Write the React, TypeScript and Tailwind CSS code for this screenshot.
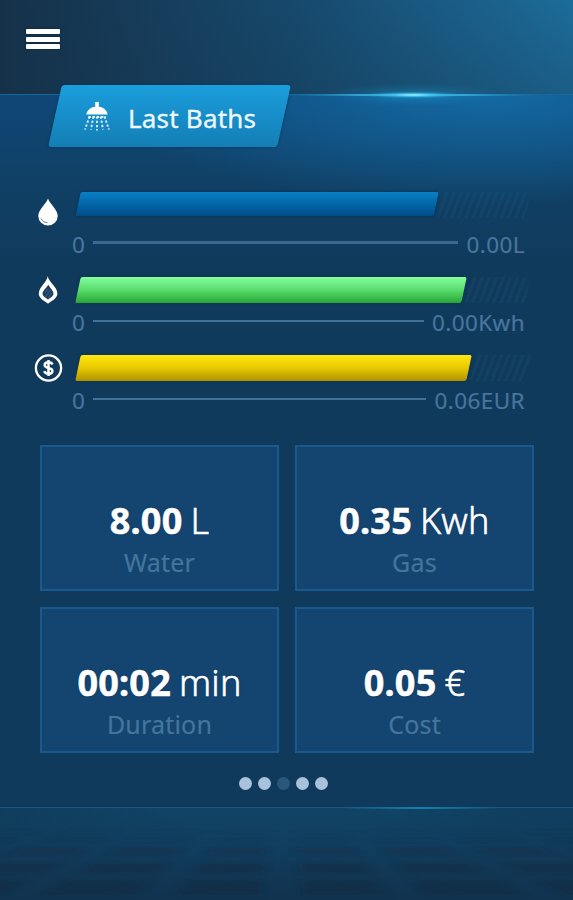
import React from "react";

interface Meter {
  id: string;
  icon: React.ReactNode;
  value: string;
  fill: string;
  width: number;
  row: string;
  rule: string;
}

interface Stat {
  value: string;
  unit: string;
  label: string;
}

const DropIcon = () => (
  <svg width="22" height="30" viewBox="0 0 22 30">
    <path
      d="M11 1.5C9.5 6.5 1.3 12.5 1.3 19a9.7 9.4 0 0 0 19.4 0C20.7 12.5 12.500 6.500 11 1.500Z"
      fill="#fff"
    />
    <path d="M4 21.500c1.200 2.500 3.500 4 6.500 4.200" fill="none" stroke="#43566f" strokeWidth="0.800" />
  </svg>
);

const FlameIcon = () => (
  <svg width="22" height="30" viewBox="0 0 22 30">
    <path
      d="M10.700 1C10.300 7 1.800 12 1.800 18.500c0 4 3.700 6.500 9.200 10.200 5.500-3.700 9.400-6.200 9.400-10.200C20.400 12 11.500 7 10.700 1Z"
      fill="#fff"
    />
    <path
      d="M11.300 9.500c-1.300 3-5.800 6-5.800 9.300 0 2.300 2.500 3.700 5.500 5.800 3-2.100 5.500-3.500 5.500-5.800 0-3.300-3.900-6.300-5.200-9.300Z"
      fill="#1c405f"
    />
    <path d="M8 18l3-4M8.500 22l5-7M11.500 23l3-5" stroke="#4f6f8a" strokeWidth="0.700" />
  </svg>
);

const DollarIcon = () => (
  <svg width="30" height="30" viewBox="0 0 30 30">
    <circle cx="15.500" cy="15" r="12.600" fill="none" stroke="#fff" strokeWidth="2.300" />
    <path
      d="M19.500 11.500c-.6-1.500-2-2.200-4-2.200-2.200 0-3.800 1-3.800 2.700 0 4.200 7.700 1.700 7.700 5.900 0 1.800-1.600 2.900-3.900 2.900-2.200 0-3.700-.9-4.200-2.600M15.500 7v16"
      fill="none"
      stroke="#fff"
      strokeWidth="2.500"
    />
  </svg>
);

const ShowerIcon = () => (
  <svg width="28" height="30" viewBox="0 0 28 30">
    <path
      d="M12.200 1h3.600v4.700c4.800.6 8 3.300 8.900 7.800H3.300C4.200 9 7.500 6.300 12.200 5.700Z"
      fill="#fff"
    />
    <g stroke="#e3f3fc" strokeWidth="1.800" strokeDasharray="2.300 1.900">
      <path d="M6.500 15.500 2 28.500M10.300 15.500 8 28.500M14 15.500V29.500M17.700 15.500 20 28.500M21.500 15.500 26 28.500" />
      <path d="M5.500 16H23" />
    </g>
  </svg>
);

const meters: Meter[] = [
  {
    id: "water",
    icon: <DropIcon />,
    value: "0.00L",
    fill: "h-[24px] bg-linear-to-b from-[#0781c5] to-[#014c8b]",
    width: 358,
    row: "h-[85px]",
    rule: "h-[3px] bg-[#3b688d]",
  },
  {
    id: "gas",
    icon: <FlameIcon />,
    value: "0.00Kwh",
    fill: "h-[26px] bg-linear-to-b from-[#83ff9b] via-[#58dc6c] to-[#25a636]",
    width: 386,
    row: "h-[78px]",
    rule: "h-[2px] bg-[#41729a]",
  },
  {
    id: "cost",
    icon: <DollarIcon />,
    value: "0.06EUR",
    fill: "h-[26px] bg-linear-to-b from-[#ffe711] via-[#e8c900] to-[#ae9300]",
    width: 391,
    row: "h-[78px]",
    rule: "h-[2px] bg-[#41729a]",
  },
];

const stats: Stat[] = [
  { value: "8.00", unit: "L", label: "Water" },
  { value: "0.35", unit: "Kwh", label: "Gas" },
  { value: "00:02", unit: "min", label: "Duration" },
  { value: "0.05", unit: "€", label: "Cost" },
];

const Header = () => (
  <header className="relative h-[94px] shrink-0 bg-linear-to-r from-[#153149] via-[#16486b] to-[#1c6c9a] pl-[26px] pt-[29px]">
    <div className="absolute inset-0 bg-linear-to-b from-transparent to-[#15324a]/25" />
    <button className="relative flex w-[34px] flex-col gap-[2.500px]">
      <span className="h-[5px] rounded-[1px] bg-white shadow-[0_0_2px_#0b2138]" />
      <span className="h-[5px] rounded-[1px] bg-white shadow-[0_0_2px_#0b2138]" />
      <span className="h-[5px] rounded-[1px] bg-white shadow-[0_0_2px_#0b2138]" />
    </button>
    {/* light flare on the edge */}
    <svg className="absolute left-[273px] top-[65px]" width="280" height="60" viewBox="0 0 280 60">
      <defs>
        <radialGradient id="halo">
          <stop offset="0" stopColor="#22b5ea" stopOpacity="0.4" />
          <stop offset="1" stopColor="#1482bb" stopOpacity="0" />
        </radialGradient>
        <radialGradient id="core">
          <stop offset="0" stopColor="#a9f2ff" />
          <stop offset="0.350" stopColor="#45c4ee" />
          <stop offset="1" stopColor="#1482bb" stopOpacity="0" />
        </radialGradient>
      </defs>
      <ellipse cx="140" cy="30" rx="90" ry="12" fill="url(#halo)" />
      <ellipse cx="140" cy="30" rx="138" ry="1.500" fill="url(#core)" />
      <ellipse cx="140" cy="30" rx="52" ry="3.500" fill="url(#core)" />
    </svg>
  </header>
);

const MeterRow = ({ meter }: { meter: Meter }) => (
  <div className={`flex ${meter.row}`}>
    <div className={`flex w-[42px] justify-center ${meter.id === "water" ? "pt-[5px]" : "-mt-[2px]"}`}>
      <div>{meter.icon}</div>
    </div>
    <div className="flex w-[456px] flex-col">
      <div className="ml-[8.500px] flex h-[26px] w-[450px] -skew-x-12">
        <div
          className={`shrink-0 rounded-[2px] shadow-[0_0_3px_#0a3050] ${meter.fill}`}
          style={{ width: meter.width }}
        />
        <div className="ml-1 grow bg-[repeating-linear-gradient(100deg,transparent_0px,transparent_2px,#1b5d86_4.500px,transparent_7px)] opacity-25" />
      </div>
      <div
        className={`ml-[3px] flex h-[30px] items-center gap-[8.500px] text-[22.500px] text-[#48759d] [-webkit-text-stroke:0.2px_#48759d] ${
          meter.id === "water" ? "mt-[12px]" : "mt-[5px]"
        }`}
      >
        <span>0</span>
        <span className={`-mt-[5px] grow ${meter.rule}`} />
        <span className="tracking-[0.400px]">{meter.value}</span>
      </div>
    </div>
  </div>
);

const StatCard = ({ stat }: { stat: Stat }) => (
  <div className="flex h-[146px] flex-col items-center border-2 border-[#19598e] bg-[#144570] pt-[53px]">
    <div className="flex h-[42px] items-center gap-[8px] text-[36px] text-white [text-shadow:0_0_2px_#092d60]">
      <span className="font-bold tracking-[0.200px] [-webkit-text-stroke:0.5px_#fff]">{stat.value}</span>
      <span className="font-light tracking-[0.200px] [-webkit-text-stroke:0.6px_#fff]">{stat.unit}</span>
    </div>
    <div className="h-[40px] text-[25px] leading-[40px] tracking-[0.200px] text-[#43759d] [-webkit-text-stroke:0.2px_#43759d]">
      {stat.label}
    </div>
  </div>
);

// rows of floor tiles, seen in perspective
const tileRows = [
  [831, 833, 0.1],
  [839, 842, 0.18],
  [848, 855, 0.35],
  [863, 873, 0.6],
  [881, 896, 0.65],
];
const tileCols = [
  [20, 100],
  [138, 229],
  [268, 358],
  [402, 492],
  [538, 630],
];

const Floor = () => {
  const px = (offset: number, y: number) => 282 + (offset * (y - 745)) / 143;

  return (
    <footer className="relative h-[93px] overflow-hidden bg-linear-to-b from-[#104365] via-[#123f60] to-[#123655]">
      <svg className="absolute inset-0" width="573" height="93" viewBox="0 807 573 93">
        <defs>
          <filter id="soft">
            <feGaussianBlur stdDeviation="4 1.500" />
          </filter>
        </defs>
        <g filter="url(#soft)" fill="#112c42">
          {tileRows.map(([y0, y1, alpha]) =>
            tileCols.flatMap(([a, b]) =>
              [-1, 1].map((side) => (
                <polygon
                  key={`${y0}-${a}-${side}`}
                  opacity={alpha}
                  points={`${px(a * side, y0)},${y0} ${px(b * side, y0)},${y0} ${px(b * side, y1)},${y1} ${px(a * side, y1)},${y1}`}
                />
              ))
            )
          )}
        </g>
      </svg>
      {/* the floor gets darker toward the corners */}
      <div className="absolute inset-0 bg-[radial-gradient(ellipse_420px_93px_at_283px_0px,transparent_30%,#112f4866_100%)]" />
      <div className="relative h-[2px] -translate-y-px bg-[#1b557e]" />
      <div className="absolute left-[340px] top-0 h-[2px] w-[160px] bg-linear-to-r from-transparent via-[#1681ae] to-transparent" />
    </footer>
  );
};

const App: React.FC = () => {
  return (
    <div className="flex h-[900px] w-[573px] flex-col overflow-hidden bg-[#103a5c] font-['Noto_Sans',sans-serif]">
      <Header />

      <main className="flex h-[713px] shrink-0 flex-col bg-[radial-gradient(ellipse_400px_110px_at_490px_0px,#1369a2_0%,#1369a200_100%),linear-gradient(to_bottom,#0f4778_0px,#104167_80px,#103a5c_170px)] shadow-[inset_0_1px_0_#1b6698]">
        {/* TITLE TAB */}
        <div className="relative -mt-[9px] ml-[55px] flex h-[62px] w-[229px] shrink-0 -skew-x-[12.500deg] items-center rounded-[3px] bg-linear-to-b from-[#1a9edc] to-[#147eb5] shadow-[0_0_3px_#0c3555]">
          <div className="flex skew-x-[12.500deg] items-center gap-[17px] pl-[28px] text-[#eef8ff]">
            <ShowerIcon />
            <h1 className="mt-[4px] text-[26px] leading-none tracking-[0.200px] whitespace-nowrap [-webkit-text-stroke:0.3px_#eef8ff]">
              Last Baths
            </h1>
          </div>
        </div>

        {/* METERS */}
        <div className="ml-[27px] mt-[45px] h-[253px] shrink-0">
          {meters.map((meter) => (
            <MeterRow key={meter.id} meter={meter} />
          ))}
        </div>

        {/* STATS */}
        <div className="ml-[40px] grid w-[494px] grid-cols-2 gap-[16px]">
          {stats.map((stat) => (
            <StatCard key={stat.label} stat={stat} />
          ))}
        </div>

        {/* PAGE DOTS */}
        <div className="mt-[24px] flex justify-center gap-[6px] pr-[6px]">
          {[0, 1, 2, 3, 4].map((i) => (
            <span
              key={i}
              className={`size-[13px] rounded-full ${i === 2 ? "bg-[#2a587c]" : "bg-[#a9c2db]"}`}
            />
          ))}
        </div>
      </main>

      <Floor />
    </div>
  );
};

export default App;
